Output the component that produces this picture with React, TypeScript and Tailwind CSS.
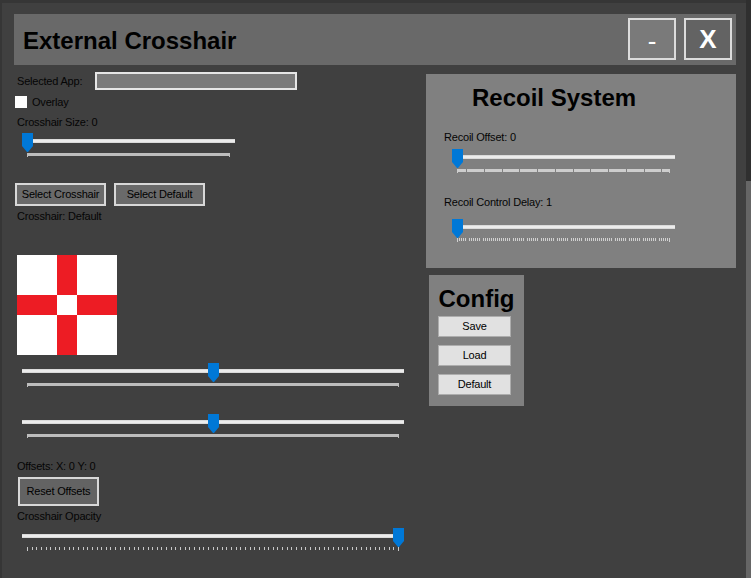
import React from "react";

type TickKind = "bar" | "segments" | "dense2" | "dense4";

function Ticks({ width, kind }: { width: number; kind: TickKind }) {
  const els: React.ReactNode[] = [];
  if (kind === "bar") {
    const c = "#bdbdbd";
    els.push(<rect key="b" x={0} y={0} width={width} height={3} fill={c} />);
    els.push(<rect key="l" x={0} y={0} width={1} height={4} fill={c} />);
    els.push(<rect key="r" x={width - 1} y={0} width={1} height={4} fill={c} />);
  } else if (kind === "segments") {
    const c = "#cdcdcd";
    els.push(<rect key="b" x={0} y={0} width={width} height={3} fill={c} />);
    els.push(<rect key="l" x={0} y={0} width={1} height={4} fill={c} />);
    els.push(<rect key="r" x={width - 1} y={0} width={1} height={4} fill={c} />);
    for (let k = 0; k < 12; k++) {
      const x = Math.round(9 + k * 17.75);
      els.push(<rect key={"g" + k} x={x} y={0} width={1} height={3} fill="#808080" />);
    }
  } else if (kind === "dense2") {
    const c = "#d0d0d0";
    for (let i = 0; i <= Math.floor(width / 2); i++) {
      const x = i * 2;
      const phase = (x + 4) % 14.6;
      if (phase > 12.8 && i !== 0 && x < width - 1) continue;
      els.push(<rect key={"t" + i} x={Math.min(x, width - 1)} y={0} width={1} height={3} fill={c} />);
    }
    els.push(<rect key="l" x={0} y={0} width={1} height={4} fill={c} />);
    els.push(<rect key="r" x={width - 1} y={0} width={1} height={4} fill={c} />);
  } else {
    const c = "#c8c8c8";
    const n = 80;
    for (let i = 0; i <= n; i++) {
      const x = Math.min(Math.round((i * (width - 1)) / n), width - 1);
      els.push(<rect key={"t" + i} x={x} y={0} width={1} height={i === 0 || i === n ? 4 : 3} fill={c} />);
    }
  }
  return (
    <svg width={width} height={4} className="block">
      {els}
    </svg>
  );
}

function Thumb({ left }: { left: number }) {
  return (
    <svg width={11} height={19} className="absolute top-0" style={{ left }}>
      <path d="M0 0H11V13L6 19H5L0 13Z" fill="#0078d7" />
    </svg>
  );
}

function Slider({
  className,
  width,
  value,
  kind,
  tickGap,
}: {
  className: string;
  width: number;
  value: number;
  kind: TickKind;
  tickGap: string;
}) {
  const pos = Math.round(value * (width - 11));
  return (
    <div className={"relative h-[24px] " + className}>
      <div className="mt-[6px] h-[4px] border-y border-[#dadada] bg-[#ececec]" />
      <div className={"mx-[5px] " + tickGap}>
        <Ticks width={width - 10} kind={kind} />
      </div>
      <Thumb left={pos} />
    </div>
  );
}

function Label({ className = "", children }: { className?: string; children: React.ReactNode }) {
  return (
    <div className={"h-[13px] whitespace-nowrap text-[11px] leading-[13px] tracking-[-0.2px] text-[#050505] " + className}>
      {children}
    </div>
  );
}

function DarkButton({ className, children }: { className: string; children: React.ReactNode }) {
  return (
    <div
      className={
        "flex items-center justify-center border-2 border-[#d8d8d8] text-[11px] tracking-[-0.2px] text-black " +
        className
      }
    >
      {children}
    </div>
  );
}

function LightButton({ className, children }: { className: string; children: React.ReactNode }) {
  return (
    <div
      className={
        "flex h-[21px] w-[73px] items-center justify-center border border-[#adadad] bg-[#e1e1e1] text-[11px] tracking-[-0.2px] text-black " +
        className
      }
    >
      {children}
    </div>
  );
}

const CELLS = Array.from({ length: 25 }, (_, i) => {
  const r = Math.floor(i / 5);
  const c = i % 5;
  return (r === 2) !== (c === 2);
});

export default function App() {
  return (
    <div className="flex h-[578px] w-[751px] overflow-hidden bg-[#363636] pl-[2px] font-['Liberation_Sans',Arial,sans-serif]">
      <div className="mt-[3px] h-[575px] w-[744px] bg-[#404040] pl-[12px] pt-[11px]">
        {/* header */}
        <div className="flex h-[51px] w-[722px] bg-[#696969] pl-[9px] pr-[4px] pt-[4px]">
          <div className="mt-[9px] flex-1 text-[24px] font-bold leading-[28px] text-black">External Crosshair</div>
          <div className="flex h-[42px] w-[48px] items-center justify-center border-2 border-[#dcdcdc] bg-[#7a7a7a] pt-[4px] text-[26px] leading-none text-white">
            -
          </div>
          <div className="ml-[8px] flex h-[42px] w-[48px] items-center justify-center border-2 border-[#dcdcdc] bg-[#636363] text-[26px] font-bold leading-none text-white">
            X
          </div>
        </div>

        {/* body */}
        <div className="flex">
          {/* left column */}
          <div className="flex w-[412px] flex-col">
            <div className="mt-[7px] flex h-[18px] items-center">
              <Label className="ml-[3px] w-[78px]">Selected App:</Label>
              <div className="h-[18px] w-[202px] border-2 border-[#e6e6e6] bg-[#7a7a7a]" />
            </div>
            <div className="mt-[6px] flex h-[12px] items-center">
              <div className="ml-[1px] h-[12px] w-[12px] bg-white" />
              <Label className="ml-[5px]">Overlay</Label>
            </div>
            <Label className="ml-[3px] mt-[8px]">Crosshair Size: 0</Label>
            <Slider className="ml-[8px] mt-[4px] w-[213px]" width={213} value={0} kind="bar" tickGap="mt-[10px]" />
            <div className="ml-[1px] mt-[26px] flex gap-[8px]">
              <DarkButton className="h-[23px] w-[91px] bg-[#6a6a6a]">Select Crosshair</DarkButton>
              <DarkButton className="h-[23px] w-[91px] bg-[#6a6a6a]">Select Default</DarkButton>
            </div>
            <Label className="ml-[3px] mt-[4px]">Crosshair: Default</Label>
            <div className="ml-[3px] mt-[32px] grid h-[100px] w-[100px] grid-cols-5">
              {CELLS.map((red, i) => (
                <div key={i} className={red ? "h-[20px] w-[20px] bg-[#ed1c24]" : "h-[20px] w-[20px] bg-white"} />
              ))}
            </div>
            <Slider className="ml-[8px] mt-[8px] w-[382px]" width={382} value={0.5} kind="bar" tickGap="mt-[10px]" />
            <Slider className="ml-[8px] mt-[27px] w-[382px]" width={382} value={0.5} kind="bar" tickGap="mt-[10px]" />
            <Label className="ml-[3px] mt-[22px]">Offsets: X: 0 Y: 0</Label>
            <DarkButton className="ml-[4px] mt-[4px] h-[29px] w-[81px] bg-[#636363]">Reset Offsets</DarkButton>
            <Label className="ml-[3px] mt-[4px]">Crosshair Opacity</Label>
            <Slider className="ml-[8px] mt-[5px] w-[382px]" width={382} value={1} kind="dense4" tickGap="mt-[9px]" />
          </div>

          {/* right column */}
          <div className="flex flex-col">
            <div className="mt-[9px] flex h-[194px] w-[310px] flex-col bg-[#808080]">
              <div className="ml-[46px] mt-[10px] text-[24px] font-bold leading-[28px] text-black">Recoil System</div>
              <Label className="ml-[18px] mt-[19px]">Recoil Offset: 0</Label>
              <Slider className="ml-[26px] mt-[5px] w-[223px]" width={223} value={0} kind="segments" tickGap="mt-[10px]" />
              <Label className="ml-[18px] mt-[23px]">Recoil Control Delay: 1</Label>
              <Slider className="ml-[26px] mt-[10px] w-[223px]" width={223} value={0} kind="dense2" tickGap="mt-[9px]" />
            </div>
            <div className="ml-[3px] mt-[7px] flex h-[131px] w-[95px] flex-col bg-[#808080] pt-[10px]">
              <div className="text-center text-[24px] font-bold leading-[28px] text-black">Config</div>
              <LightButton className="ml-[9px] mt-[3px]">Save</LightButton>
              <LightButton className="ml-[9px] mt-[8px]">Load</LightButton>
              <LightButton className="ml-[9px] mt-[8px]">Default</LightButton>
            </div>
          </div>
        </div>
      </div>
      <div className="flex w-[5px] flex-col">
        <div className="h-[181px] bg-[#2f2f2f]" />
        <div className="flex-1 bg-[#666666]" />
      </div>
    </div>
  );
}
